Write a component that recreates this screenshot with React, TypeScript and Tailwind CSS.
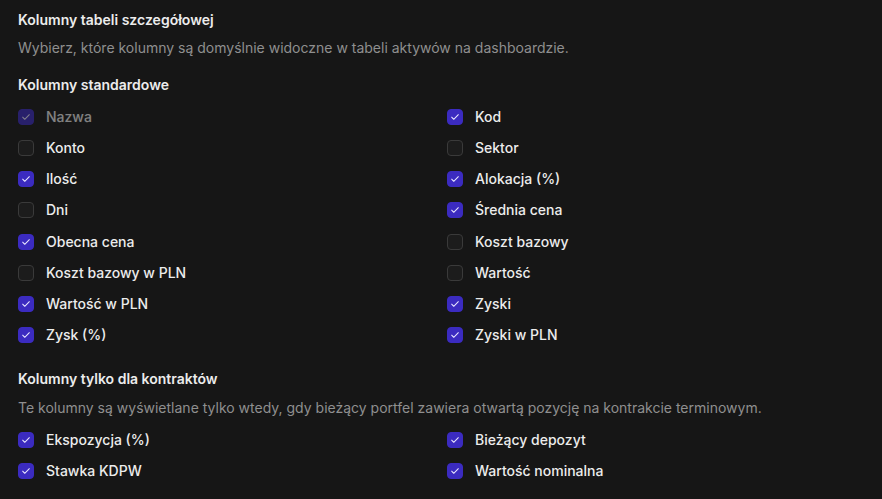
import { useState } from 'react'

type Col = { key: string; label: string; checked: boolean; disabled?: boolean }

const standardCols: Col[] = [
  { key: 'name', label: 'Nazwa', checked: true, disabled: true },
  { key: 'code', label: 'Kod', checked: true },
  { key: 'account', label: 'Konto', checked: false },
  { key: 'sector', label: 'Sektor', checked: false },
  { key: 'qty', label: 'Ilość', checked: true },
  { key: 'alloc', label: 'Alokacja (%)', checked: true },
  { key: 'days', label: 'Dni', checked: false },
  { key: 'avg', label: 'Średnia cena', checked: true },
  { key: 'price', label: 'Obecna cena', checked: true },
  { key: 'cost', label: 'Koszt bazowy', checked: false },
  { key: 'costPln', label: 'Koszt bazowy w PLN', checked: false },
  { key: 'value', label: 'Wartość', checked: false },
  { key: 'valuePln', label: 'Wartość w PLN', checked: true },
  { key: 'gains', label: 'Zyski', checked: true },
  { key: 'gainPct', label: 'Zysk (%)', checked: true },
  { key: 'gainsPln', label: 'Zyski w PLN', checked: true },
]

const futuresCols: Col[] = [
  { key: 'exposure', label: 'Ekspozycja (%)', checked: true },
  { key: 'margin', label: 'Bieżący depozyt', checked: true },
  { key: 'kdpw', label: 'Stawka KDPW', checked: true },
  { key: 'notional', label: 'Wartość nominalna', checked: true },
]

function CheckRow({ col, onToggle }: { col: Col; onToggle: () => void }) {
  return (
    <label
      className={`flex items-center gap-3 h-5 ${col.disabled ? 'opacity-50 cursor-not-allowed' : 'cursor-pointer'}`}
    >
      <button
        type="button"
        onClick={onToggle}
        disabled={col.disabled}
        className={`w-4 h-4 shrink-0 rounded-[4px] flex items-center justify-center border ${
          col.checked ? 'bg-[#3b2bc0] border-[#3b2bc0]' : 'bg-[#1c1c1c] border-[#3a3a3a]'
        }`}
      >
        {col.checked && (
          <svg width="10" height="10" viewBox="0 0 24 24" fill="none" stroke="#e9e6ff" strokeWidth="2.5" strokeLinecap="round" strokeLinejoin="round">
            <path d="M4 12.5l5 5L20 6.5" />
          </svg>
        )}
      </button>
      <span className="text-sm font-medium text-[#ececec] leading-5">{col.label}</span>
    </label>
  )
}

export default function App() {
  const [std, setStd] = useState(standardCols)
  const [fut, setFut] = useState(futuresCols)

  function toggle(list: Col[], set: (c: Col[]) => void, key: string) {
    set(list.map(c => (c.key === key && !c.disabled ? { ...c, checked: !c.checked } : c)))
  }

  return (
    <div
      className="w-[882px] h-[499px] bg-[#161616] px-[18px] pt-[10px] text-[#ececec]"
      style={{ fontFamily: 'Inter, "Noto Sans", sans-serif' }}
    >
      <h2 className="text-sm font-semibold leading-5">Kolumny tabeli szczegółowej</h2>
      <p className="text-sm leading-5 text-[#8f8f8f] mt-2">
        Wybierz, które kolumny są domyślnie widoczne w tabeli aktywów na dashboardzie.
      </p>

      <h3 className="text-sm font-semibold leading-5 mt-[17px]">Kolumny standardowe</h3>
      <div className="grid grid-cols-2 gap-x-3 gap-y-[11.15px] mt-[12px]">
        {std.map(c => (
          <CheckRow key={c.key} col={c} onToggle={() => toggle(std, setStd, c.key)} />
        ))}
      </div>

      <h3 className="text-sm font-semibold leading-5 mt-[24px]">Kolumny tylko dla kontraktów</h3>
      <p className="text-sm leading-5 text-[#8f8f8f] mt-[9px]">
        Te kolumny są wyświetlane tylko wtedy, gdy bieżący portfel zawiera otwartą pozycję na kontrakcie terminowym.
      </p>
      <div className="grid grid-cols-2 gap-x-3 gap-y-[11px] mt-[12px]">
        {fut.map(c => (
          <CheckRow key={c.key} col={c} onToggle={() => toggle(fut, setFut, c.key)} />
        ))}
      </div>
    </div>
  )
}
